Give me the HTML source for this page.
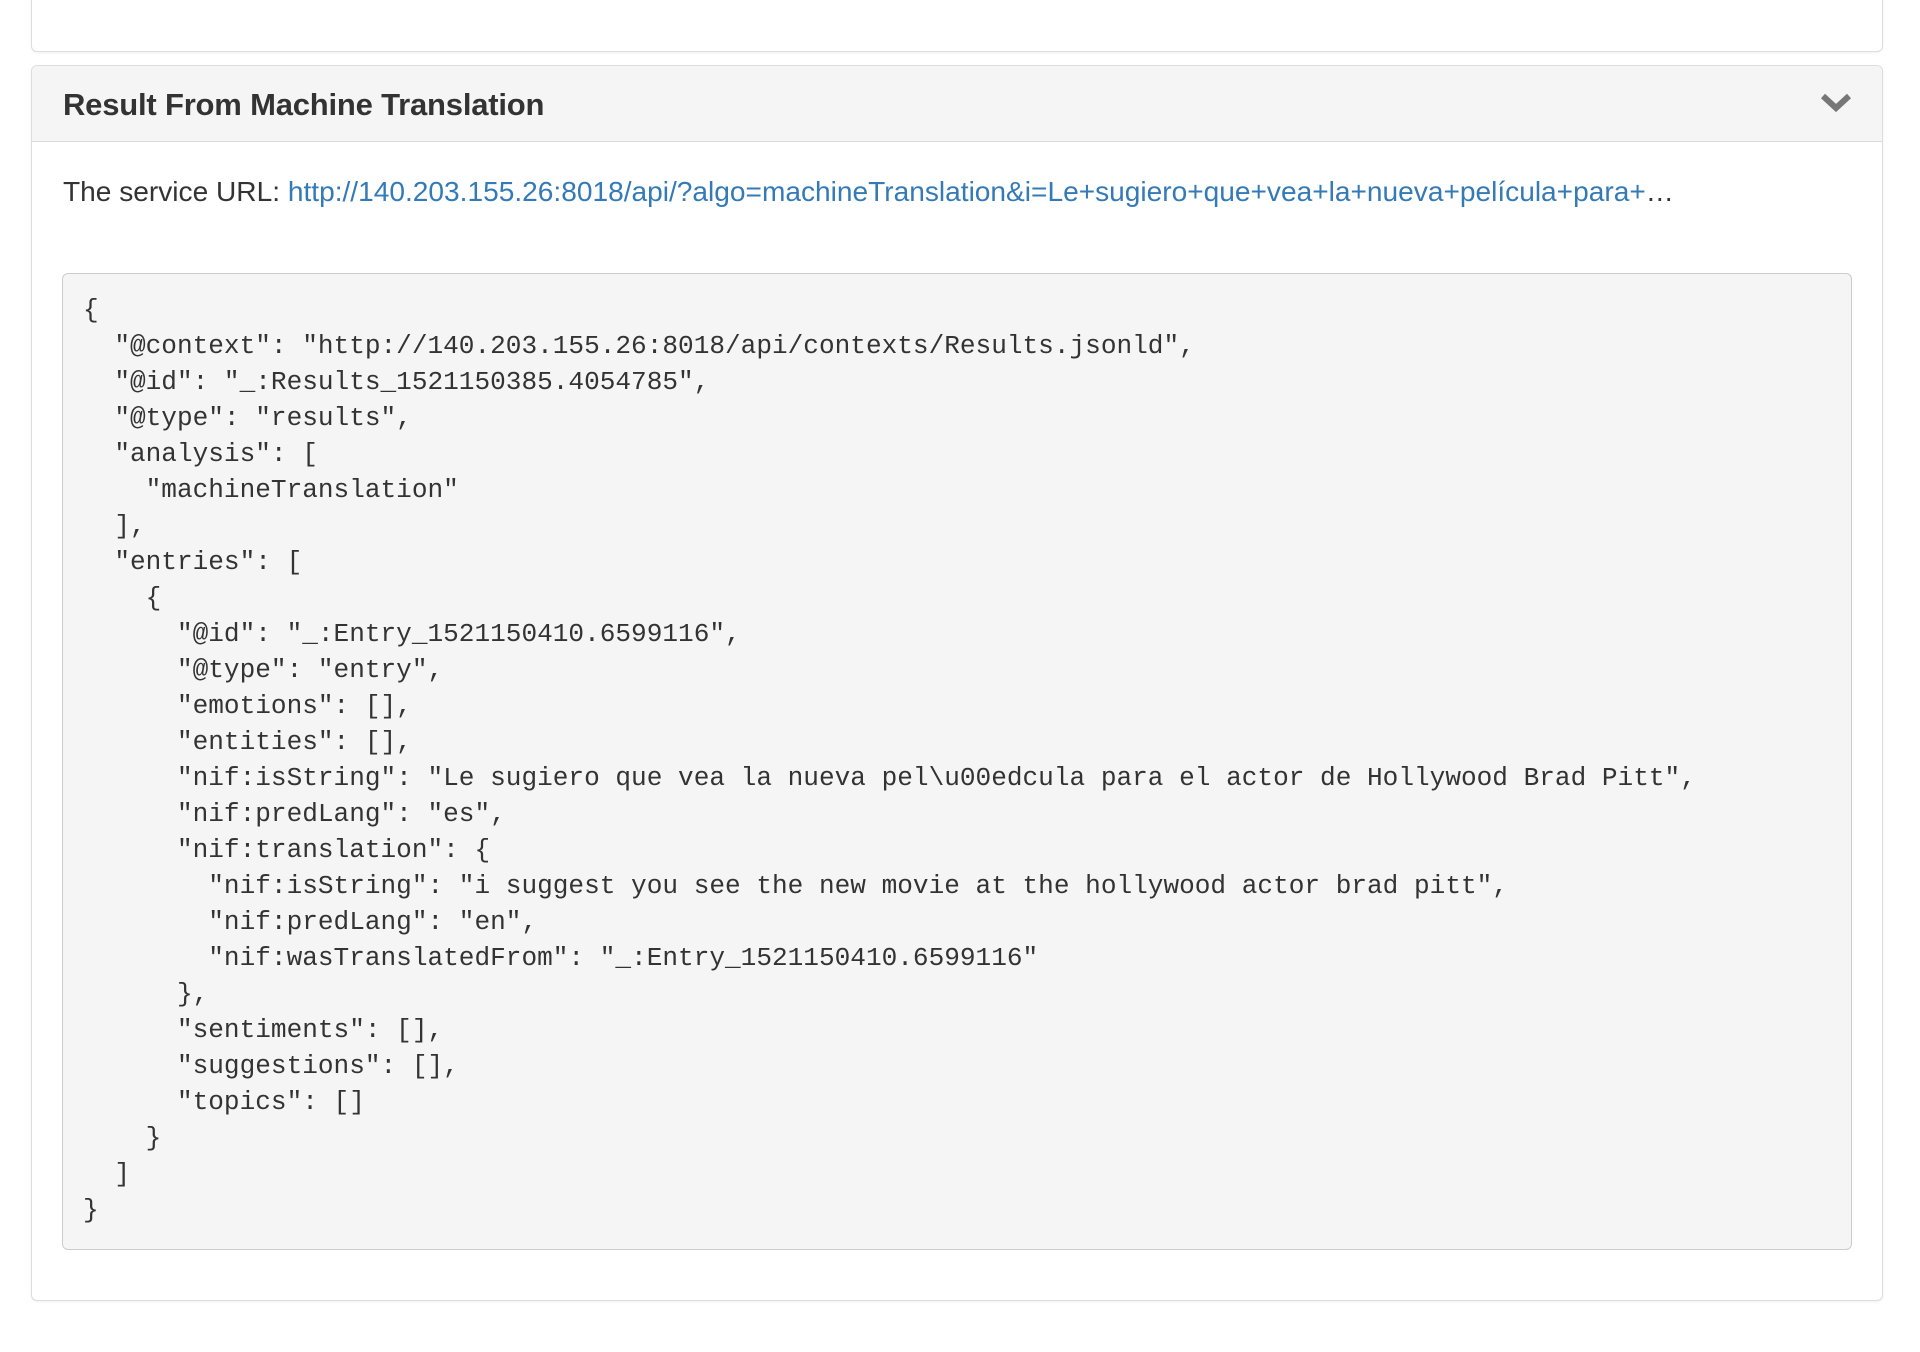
<!DOCTYPE html>
<html><head><meta charset="utf-8"><style>
html,body{margin:0;padding:0;background:#fff;width:1920px;height:1352px;overflow:hidden;font-family:"Liberation Sans",Arial,sans-serif;color:#333}
.p1{position:absolute;left:31px;top:-10px;width:1850px;height:60px;border:1px solid #ddd;border-radius:6px;box-shadow:0 1px 2px rgba(0,0,0,.06)}
.p2{position:absolute;left:31px;top:65px;width:1850px;height:1234px;border:1px solid #ddd;border-radius:6px;box-shadow:0 1px 2px rgba(0,0,0,.06);overflow:hidden}
.hd{height:75px;background:#f5f5f5;border-bottom:1px solid #ddd;position:relative}
.hd h3{margin:0;position:absolute;left:31px;top:21px;font-size:31px;font-weight:bold;color:#333;line-height:36px;letter-spacing:-0.2px}
.chev{position:absolute;left:1788px;top:25px}
.url{position:absolute;left:31px;top:108px;font-size:28.1px;line-height:36px;white-space:nowrap}
.url a{color:#337ab7;text-decoration:none}
pre{position:absolute;left:30px;top:207px;width:1748px;height:937px;margin:0;padding:18px 20px 20px 20px;background:#f5f5f5;border:1px solid #ccc;border-radius:6px;font-family:"Liberation Mono",monospace;font-size:26.1px;line-height:36px;color:#333;overflow:hidden}
</style></head><body>
<div class="p1"></div>
<div class="p2">
<div class="hd"><h3>Result From Machine Translation</h3>
<svg class="chev" width="32" height="22" viewBox="0 0 32 22"><path d="M3 5 L16 17 L29 5" fill="none" stroke="#777" stroke-width="6" stroke-linejoin="miter"/></svg>
</div>
<div class="url">The service URL: <a>http://140.203.155.26:8018/api/?algo=machineTranslation&amp;i=Le+sugiero+que+vea+la+nueva+película+para+</a>…</div>
<pre>{
  "@context": "http://140.203.155.26:8018/api/contexts/Results.jsonld",
  "@id": "_:Results_1521150385.4054785",
  "@type": "results",
  "analysis": [
    "machineTranslation"
  ],
  "entries": [
    {
      "@id": "_:Entry_1521150410.6599116",
      "@type": "entry",
      "emotions": [],
      "entities": [],
      "nif:isString": "Le sugiero que vea la nueva pel\u00edcula para el actor de Hollywood Brad Pitt",
      "nif:predLang": "es",
      "nif:translation": {
        "nif:isString": "i suggest you see the new movie at the hollywood actor brad pitt",
        "nif:predLang": "en",
        "nif:wasTranslatedFrom": "_:Entry_1521150410.6599116"
      },
      "sentiments": [],
      "suggestions": [],
      "topics": []
    }
  ]
}</pre>
</div>
</body></html>
